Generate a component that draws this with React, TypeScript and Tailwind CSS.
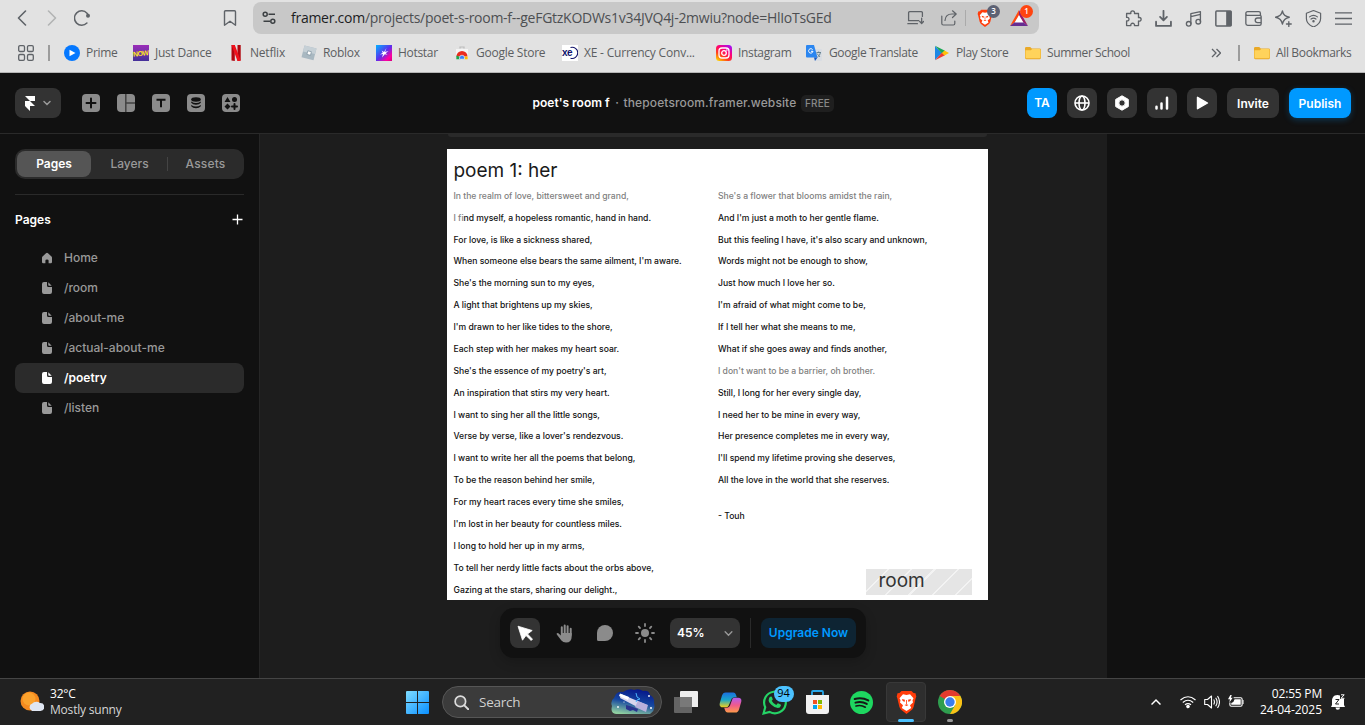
import React from 'react';

type IconProps = { children: React.ReactNode; className?: string; box?: string };

const Svg = ({ children, className = 'size-4', box = '0 0 16 16' }: IconProps) => (
  <svg viewBox={box} className={`shrink-0 ${className}`} fill="none">
    {children}
  </svg>
);

const LINE = { stroke: '#5f6368', strokeWidth: 1.4, strokeLinecap: 'round', strokeLinejoin: 'round' } as const;

const BraveLogo = ({ className }: { className: string }) => (
  <Svg box="0 0 20 24" className={className}>
    <path d="M5 1h10l2 2 2 .2.8 3.3-.7 2-2 8.5-1.4 2.6L10 24l-5.7-4.4L2.9 17 .9 8.500.2 6.500 1 3.200 3 3z" fill="#ff3d0b" />
    <path d="M10 5l3.500-.700 3.500 4-1 2 .5 2.300-3 2.700 1.200 2.700-4.700 3-4.700-3L6.500 15.300l-3-2.700.5-2.300-1-2 3.500-4z" fill="#fff" />
    <path d="M5.500 9l3 .800-.500 2.200-2-1.300zM14.500 9l-3 .800.500 2.200 2-1.300zM8 15l2 1 2-1-2-.800zM9.600 10h.8v4h-.8z" fill="#ff3d0b" />
  </Svg>
);

const Folder = () => (
  <Svg>
    <path d="M0 3.200Q0 2 1.200 2h4l1.600 1.600h7.700q1.500 0 1.500 1.300v7.900q0 1.400-1.400 1.400H1.400Q0 14.200 0 12.800z" fill="#e9a928" />
    <path d="M.5 5.300h5.300L7.200 4h7.300q1 0 1 1v7.300q0 1-1 1H1.500q-1 0-1-1z" fill="#ffd35b" />
  </Svg>
);

const Divider = () => <span className="h-4 w-[2px] shrink-0 bg-[#9c9c9c]" />;

const bookmarks = [
  {
    label: 'Prime', slot: 'w-[69px]', track: 'tracking-[-0.3px]',
    icon: <Svg><circle cx="8" cy="8" r="8" fill="#0578ff" /><path d="M5.500 4.800v6.400L11.500 8z" fill="#fff" /></Svg>,
  },
  {
    label: 'Just Dance', slot: 'w-[95px]', track: 'tracking-[-0.25px]',
    icon: (
      <span className="flex size-4 shrink-0 items-center justify-center bg-linear-to-b from-[#9b2bb8] to-[#43309a]">
        <span className="-rotate-6 font-['Liberation_Sans'] text-[7px] font-bold leading-none tracking-[-0.6px] text-[#ffe81c]">NOW</span>
      </span>
    ),
  },
  {
    label: 'Netflix', slot: 'w-[73px]', track: 'tracking-[-0.2px]',
    icon: <Svg><path d="M3.500 0H6.800V16L3.500 15.500zM9.500 0h3.200v15.500L9.500 16z" fill="#b1060f" /><path d="M3.500 0h3.300l5.900 15.800L9.500 16z" fill="#f0101c" /></Svg>,
  },
  {
    label: 'Roblox', slot: 'w-[75px]', track: 'tracking-[-0.3px]',
    icon: <Svg><path d="M3.500.500 15.500 3.500 12.500 15.300.500 12.200z" fill="#a9b8c1" /><path d="M3.500.500 15.500 3.500 14 9 2 6.500z" fill="#c6d0d6" /><path d="M6.800 5.800l3.600.9-.9 3.600-3.600-.9z" fill="#fff" stroke="#8497a3" strokeWidth=".8" /></Svg>,
  },
  {
    label: 'Hotstar', slot: 'w-[78px]', track: 'tracking-[-0.3px]',
    icon: (
      <Svg>
        <defs><linearGradient id="hs" x1="0" y1="0" x2="1" y2="1"><stop stopColor="#00b4ff" /><stop offset=".5" stopColor="#5a30ee" /><stop offset=".8" stopColor="#ff00a0" /><stop offset="1" stopColor="#d80080" /></linearGradient></defs>
        <path d="M0 0h16v16H0z" fill="url(#hs)" />
        <path d="M10.500 3 9 7 12.500 6 9.700 8.200l1.800 1.600-2.700-.5L6 12.500 7 9 4 9.500l2.700-1.800L5.700 5.500 8 7z" fill="#fff" />
      </Svg>
    ),
  },
  {
    label: 'Google Store', slot: 'w-[108px]', track: 'tracking-[-0.25px]',
    icon: (
      <Svg>
        <path d="M6 3.500V2h4v1.500" stroke="#bbb" strokeWidth="1.200" /><path d="M2 4h12v10H2z" fill="#f4f4f4" />
        <path d="M2.500 11.500a5.500 5.500 0 0 1 11 0z" fill="#ea2b1f" /><path d="M2.300 10.500 6.500 12v2.200H2.300z" fill="#1fa34a" /><path d="M9.500 11.500h4.200v2.700H8z" fill="#fbbc05" /><path d="M5.500 14.200v-1.500a2.500 2.500 0 0 1 5 0v1.500z" fill="#3b82f6" stroke="#fff" strokeWidth=".6" />
      </Svg>
    ),
  },
  {
    label: 'XE - Currency Conv...', slot: 'w-[154px]', track: 'tracking-[-0.2px]',
    icon: (
      <span className="relative flex size-4 shrink-0 items-center bg-white">
        <span className="relative -mt-px font-['Liberation_Sans'] text-[10px] font-bold leading-none tracking-[-0.5px] text-[#12146b]">xe</span>
        <svg viewBox="0 0 16 16" className="absolute inset-0 size-4" fill="none"><path d="M8.500 2.500A5.600 5.600 0 1 1 8.500 13.200" stroke="#12146b" strokeWidth="1.100" /></svg>
      </span>
    ),
  },
  {
    label: 'Instagram', slot: 'w-[90px]', track: 'tracking-[-0.35px]',
    icon: (
      <Svg>
        <defs><linearGradient id="ig" x1=".9" y1="0" x2=".2" y2="1"><stop stopColor="#9a10ff" /><stop offset=".4" stopColor="#ff0078" /><stop offset=".7" stopColor="#ff3b20" /><stop offset="1" stopColor="#ffc800" /></linearGradient></defs>
        <rect width="16" height="16" rx="3.500" fill="url(#ig)" /><rect x="3" y="3" width="10" height="10" rx="3" stroke="#fff" strokeWidth="1.300" /><circle cx="8" cy="8" r="2.300" stroke="#fff" strokeWidth="1.300" /><circle cx="10.900" cy="5.100" r=".8" fill="#fff" />
      </Svg>
    ),
  },
  {
    label: 'Google Translate', slot: 'w-[128px]', track: 'tracking-[-0.35px]',
    icon: (
      <Svg className="mr-px size-4">
        <path d="M6 4h9q1 0 1 1v10q0 1-1 1H9z" fill="#d9dde3" /><path d="M1 0h7l3.500 12.500H1q-1 0-1-1V1q0-1 1-1z" fill="#2b86f0" /><path d="M8 12.500h3.500L9 16z" fill="#1457c0" />
        <path d="M6.600 4.600A2.200 2.200 0 1 0 7 6.300H5" stroke="#fff" strokeWidth="1" /><path d="M10.500 7.500h4.500M12.700 6.500v1M11 8.500l3 3.500M14.500 7.500q-.5 3-3 4.500" stroke="#607d8b" strokeWidth=".9" />
      </Svg>
    ),
  },
  {
    label: 'Play Store', slot: 'w-[91px]', track: 'tracking-[-0.35px]',
    icon: <Svg><path d="M1 1v14l7-7z" fill="#1e88e5" /><path d="M1 .800 11 5.800 8 8.500z" fill="#1aa754" /><path d="M1 15.200 11 10.200 8 7.500z" fill="#f03c30" /><path d="M10.500 5.500 15 8l-4.500 2.500L8 8z" fill="#ffc107" /></Svg>,
  },
  { label: 'Summer School', slot: 'w-[186px]', track: 'tracking-[-0.4px]', icon: <Folder /> },
];

const browserActions = [
  <path key="a" {...LINE} strokeWidth={1.250} d="M1.500 3.300h4c-.8-3.400 4.200-3.400 3.400 0h3.800v3.900c3.300-1 3.300 4.200 0 3.200v4.300H8.900c.7-3-4.100-3-3.400 0h-4v-4.500c3 .8 3-4 0-3.200z" />,
  <path key="b" {...LINE} strokeWidth={1.700} d="M8 .8v8.500M4.800 6.500 8 9.700l3.200-3.200M1 11v4h14v-4" />,
  <g key="c" {...LINE} strokeWidth={1.250}><path d="M5.500 13V3.500l9-2V11M5.500 6.200l9-2" /><circle cx="3.500" cy="13" r="2.200" /><circle cx="12.500" cy="11" r="2.200" /></g>,
  <g key="d"><rect x=".8" y="1" width="14.400" height="14" rx=".8" {...LINE} /><path d="M10.500 1h5v14h-5z" fill="#5f6368" /></g>,
  <g key="e" {...LINE} strokeWidth={1.250}><path d="M14.500 5.200V3q0-1.500-1.500-1.500H2.500q-1.700 0-1.700 1.800T2.500 5h11.700q1 0 1 1v7q0 1.500-1.500 1.500H2.500q-1.700 0-1.700-1.700V3.500M15 7.500h-3.200a2.200 2.200 0 0 0 0 4.400H15" /></g>,
  <g key="f" {...LINE} strokeWidth={1.250}><path d="M7 .8q.8 5 6.500 6-5.500 1-6.500 6.500Q6 7.800.5 6.800 6 5.800 7 .8zM13 11v4.500M10.800 13.200h4.500" /></g>,
  <g key="g" {...LINE} strokeWidth={1.100}><path d="M8 .5 14.700 3v5c0 4-3 6.500-6.700 8-3.700-1.500-6.700-4-6.700-8V3z" /><path d="M4.300 6.500q3.700-3 7.400 0M5.700 8.500q2.300-1.800 4.600 0" /><circle cx="8" cy="10.500" r=".6" fill="#5f6368" /></g>,
  <path key="h" stroke="#5f6368" strokeWidth="1.300" d="M0 2.700h16M0 8h16M0 13.300h16" />,
];

function Browser() {
  return (
    <div className="flex h-[73px] shrink-0 flex-col border-b border-[#b5b5b5] bg-[#e2e2e2] font-['Open_Sans',sans-serif]">
      <div className="flex h-9 items-center">
        <div className="flex w-11 justify-center"><Svg><path {...LINE} strokeWidth={1.600} d="M11.500 1 4.500 8l7 7" /></Svg></div>
        <div className="flex w-4 justify-center"><Svg><path {...LINE} stroke="#b2b4b4" strokeWidth={1.600} d="M4.500 1l7 7-7 7" /></Svg></div>
        <div className="flex w-11 justify-center">
          <Svg><path {...LINE} strokeWidth={1.500} d="M12.900 13A7.200 7.200 0 1 1 13 3.200l1.500 2" /><circle cx="14" cy="5.700" r="2" fill="#5f6368" /></Svg>
        </div>
        <div className="ml-[116px] flex w-5 justify-center"><Svg><path {...LINE} strokeWidth={1.400} d="M3.500.7h9q1 0 1 1v13.500L8 11.200l-5.500 4V1.700q0-1 1-1z" /></Svg></div>
        <div className="mb-px ml-[13px] flex h-8 w-[786px] items-center rounded-[8px] bg-[#c8c8c8]">
          <Svg className="ml-[9px] size-[14px]" box="0 0 14 14">
            <g stroke="#3c4043" strokeWidth="1.500"><circle cx="3.200" cy="3.200" r="2" /><circle cx="10.800" cy="10.200" r="2" /><path d="M6.500 3.200H13M1.500 10.200H8" /></g>
          </Svg>
          <div className="ml-[15px] w-[612px] whitespace-nowrap text-[14px] tracking-[-0.265px] text-[#4d4f52]">
            <span className="text-[#1c1d1f]">framer.com</span>/projects/poet-s-room-f--geFGtzKODWs1v34JVQ4j-2mwiu?node=HlIoTsGEd
          </div>
          <Svg className="ml-[4px] size-[17px]"><g {...LINE} strokeWidth={1.200}><path d="M14.500 7V3.500q0-1-1-1h-11q-1 0-1 1V11h9.500M.8 13.800h9M13.800 8.500v5M12 11.800l1.800 1.800 1.800-1.800" /></g></Svg>
          <Svg className="ml-[17px] size-4"><g {...LINE} strokeWidth={1.200}><path d="M.8 6v7.500q0 1.500 1.500 1.500h10q1.500 0 1.500-1.500V11M4 10.500Q4.500 4 11 4h4M11.500.8 15.200 4l-3.700 3.500" /></g></Svg>
          <span className="ml-2 h-4 w-px bg-[#aaa]" />
          <div className="relative ml-[11px] flex w-[33px]">
            <BraveLogo className="h-[18px] w-4" />
            <span className="absolute -top-[4px] left-[10px] flex size-[13px] items-center justify-center rounded-full bg-[#5d6274] text-[8px] font-semibold text-white">3</span>
          </div>
          <div className="relative flex">
            <Svg className="h-[16px] w-[18px]" box="0 0 18 16"><path d="M9 0v6L5 12l-5 4z" fill="#ff4a12" /><path d="M9 0v6l4 6 5 4z" fill="#9c1c68" /><path d="M0 16l5-4h8l5 4z" fill="#662d91" /><path d="M9 5l4.300 7.500H4.700z" fill="#fff" /></Svg>
            <span className="absolute -top-[5px] left-[10px] flex size-[13px] items-center justify-center rounded-full bg-[#ff4410] text-[8px] font-semibold text-white">1</span>
          </div>
        </div>
        <div className="ml-[79px] flex">
          {browserActions.map((icon, i) => (
            <div key={i} className="flex w-[30px] justify-center"><Svg className="size-[17px]">{icon}</Svg></div>
          ))}
        </div>
      </div>
      <div className="flex h-[34px] items-center pl-[18px] text-[12px] text-[#5c5e61]">
        <Svg><g stroke="#5f6368" strokeWidth="1.300"><rect x=".7" y=".7" width="5.800" height="5.800" rx="1.300" /><rect x="9.500" y=".7" width="5.800" height="5.800" rx="1.300" /><rect x=".7" y="9.500" width="5.800" height="5.800" rx="1.300" /><rect x="9.500" y="9.500" width="5.800" height="5.800" rx="1.300" /></g></Svg>
        <span className="w-[14px]" /><Divider /><span className="w-[14px]" />
        {bookmarks.map((b) => (
          <div key={b.label} className={`flex shrink-0 items-center gap-1.5 whitespace-nowrap ${b.slot} ${b.track}`}>
            {b.icon}<span>{b.label}</span>
          </div>
        ))}
        <Svg className="size-[10px]" box="0 0 10 10"><path d="M1 1l4 4-4 4M5.500 1l4 4-4 4" stroke="#5f6368" strokeWidth="1.300" /></Svg>
        <span className="w-[17px]" /><Divider /><span className="w-[14px]" />
        <div className="flex items-center gap-1.5 whitespace-nowrap tracking-[-0.35px]"><Folder />All Bookmarks</div>
      </div>
    </div>
  );
}

const insertTools = [
  <path key="a" d="M9 4.500v9M4.500 9h9" stroke="#111" strokeWidth="2" strokeLinecap="round" />,
  <path key="b" d="M8.800 0v18M9 9h9" stroke="#111" strokeOpacity=".6" strokeWidth="1.500" />,
  <path key="c" d="M4.500 5.700h9M9 5.700v7.600" stroke="#111" strokeWidth="2" />,
  <g key="d" fill="#111"><ellipse cx="9" cy="5.500" rx="4.800" ry="2.200" /><path d="M4.200 7.500q4.800 3.200 9.600 0v1.200q-1.500 2-4.800 2T4.200 8.700zM4.200 11q4.800 3.200 9.600 0v1.200q-1.500 2-4.800 2t-4.800-2z" /></g>,
  <g key="e" fill="#111"><path d="M5.500 3l3 5h-6zM5.500 9.500l3 3-3 3-3-3z" /><circle cx="12.500" cy="5.500" r="2.500" /><path d="M12.500 10v5M10 12.500h5" stroke="#111" strokeWidth="2" strokeLinecap="round" /></g>,
];

const headerIcons = [
  <g key="a" stroke="#fff" strokeWidth="1.600"><circle cx="8" cy="8" r="7" /><ellipse cx="8" cy="8" rx="3" ry="7" /><path d="M1 8h14" /></g>,
  <path key="b" fill="#fff" stroke="#fff" strokeLinejoin="round" fillRule="evenodd" d="M8 .8l6.300 3.600v7.200L8 15.200l-6.300-3.600V4.400zM8 4.800a3.200 3.200 0 1 0 0 6.400 3.200 3.200 0 0 0 0-6.400z" />,
  <path key="c" stroke="#fff" strokeWidth="2.500" strokeLinecap="round" d="M2.500 11.700v1.800M7.500 8.500v5M13 2.800v10.700" />,
  <path key="d" fill="#fff" stroke="#fff" strokeWidth="1.400" strokeLinejoin="round" d="M3.500 2.300v11.400L13.500 8z" />,
];

function FramerHeader() {
  return (
    <div className="flex h-[61px] shrink-0 items-center border-b border-[#2a2a2a] pl-[15px]">
      <div className="flex h-[30px] w-[46px] shrink-0 items-center justify-center gap-[8px] rounded-[8px] bg-[#333]">
        <Svg className="h-[15px] w-[10px]" box="0 0 10 15"><path d="M0 0h10v5H5zM0 5h5l5 5H5v5l-5-5z" fill="#fff" /></Svg>
        <Svg className="size-[8px]" box="0 0 8 8"><path d="M1 2.500 4 5.500l3-3" stroke="#999" strokeWidth="1.500" strokeLinecap="round" /></Svg>
      </div>
      <div className="ml-[21px] flex gap-[17px]">
        {insertTools.map((t, i) => (
          <Svg key={i} box="0 0 18 18" className="size-[18px] rounded-[4px] bg-[#8b8b8b]">{t}</Svg>
        ))}
      </div>
      <div className="ml-[292.500px] flex w-[494.500px] shrink-0 items-center whitespace-nowrap text-[12px]">
        <span className="w-[78px] font-semibold text-white">poet's room f</span>
        <span className="w-[13px] text-center font-medium text-[#999]">·</span>
        <span className="w-[174px] font-medium tracking-[0.120px] text-[#999]">thepoetsroom.framer.website</span>
        <span className="ml-[3.500px] flex h-[17px] w-[33px] items-center justify-center rounded-[5px] bg-[#1f1f1f] text-[10px] font-medium tracking-[0.1px] text-[#888]">FREE</span>
      </div>
      <div className="flex shrink-0 gap-[10px] text-[12px] font-semibold text-white">
        <div className="flex size-[30px] items-center justify-center rounded-[8px] bg-[#09f]">TA</div>
        {headerIcons.map((t, i) => (
          <div key={i} className="flex size-[30px] items-center justify-center rounded-[8px] bg-[#333]"><Svg>{t}</Svg></div>
        ))}
        <div className="flex h-[30px] w-[52px] items-center justify-center rounded-[8px] bg-[#333] pt-px">Invite</div>
        <div className="flex h-[30px] w-[62px] items-center justify-center rounded-[8px] bg-[#09f] pt-px shadow-[0_2px_6px_#0099ff44]">Publish</div>
      </div>
    </div>
  );
}

const pages = ['Home', '/room', '/about-me', '/actual-about-me', '/poetry', '/listen'];

function Sidebar() {
  return (
    <div className="flex w-[260px] shrink-0 flex-col border-r border-[#262626] px-[15px] pt-[15px] text-[12px] font-medium text-[#999]">
      <div className="flex h-[30px] w-[229px] items-center rounded-[10px] bg-[#2b2b2b] p-[2px]">
        <div className="flex h-[26px] w-[74px] shrink-0 items-center justify-center rounded-[8px] bg-[#555] font-semibold text-white">Pages</div>
        <div className="flex h-[14px] w-[77px] shrink-0 items-center justify-center border-r border-[#444] pl-px">Layers</div>
        <div className="flex w-[75px] shrink-0 items-center justify-center tracking-[0.150px]">Assets</div>
      </div>
      <div className="mt-[15px] h-px w-[229px] bg-[#2a2a2a]" />
      <div className="mt-[14px] flex h-[22px] w-[229px] items-center justify-between text-white">
        <span className="text-[12px] font-semibold">Pages</span>
        <Svg className="mb-[2px] mr-[1px] size-[11px]" box="0 0 11 11"><path d="M5.500.5v10M.5 5.500h10" stroke="#fff" strokeWidth="1.300" /></Svg>
      </div>
      <div className="mt-[12px] flex w-[229px] flex-col">
        {pages.map((p) => (
          <div
            key={p}
            className={`flex h-[30px] items-center gap-[12px] rounded-[8px] pl-[27px] ${p === '/poetry' ? 'bg-[#2b2b2b] font-semibold text-white' : ''}`}
          >
            {p === 'Home' ? (
              <Svg className="h-[12px] w-[10px]" box="0 0 10 12"><path d="M4 1.300q1-.9 2 0L9.500 4.500q.5.500.5 1.200V10q0 1.200-1.200 1.200H6.600V8.500q0-1-1.600-1t-1.600 1v2.700H1.200Q0 11.200 0 10V5.700q0-.7.500-1.200z" fill="currentColor" /></Svg>
            ) : (
              <Svg className="h-[12px] w-[10px]" box="0 0 10 12"><path d="M0 2q0-2 2-2h3v3.500Q5 5 6.500 5H10v5q0 2-2 2H2q-2 0-2-2zM6.300.3 9.700 3.700H7q-.7 0-.7-.7z" fill="currentColor" /></Svg>
            )}
            <span>{p}</span>
          </div>
        ))}
      </div>
    </div>
  );
}

const leftVerse = [
  'In the realm of love, bittersweet and grand,',
  'I find myself, a hopeless romantic, hand in hand.',
  'For love, is like a sickness shared,',
  "When someone else bears the same ailment, I'm aware.",
  "She's the morning sun to my eyes,",
  'A light that brightens up my skies,',
  "I'm drawn to her like tides to the shore,",
  'Each step with her makes my heart soar.',
  "She's the essence of my poetry's art,",
  'An inspiration that stirs my very heart.',
  'I want to sing her all the little songs,',
  "Verse by verse, like a lover's rendezvous.",
  'I want to write her all the poems that belong,',
  'To be the reason behind her smile,',
  'For my heart races every time she smiles,',
  "I'm lost in her beauty for countless miles.",
  'I long to hold her up in my arms,',
  'To tell her nerdy little facts about the orbs above,',
  'Gazing at the stars, sharing our delight.,',
];

const rightVerse = [
  "She's a flower that blooms amidst the rain,",
  "And I'm just a moth to her gentle flame.",
  "But this feeling I have, it's also scary and unknown,",
  'Words might not be enough to show,',
  'Just how much I love her so.',
  "I'm afraid of what might come to be,",
  'If I tell her what she means to me,',
  'What if she goes away and finds another,',
  "I don't want to be a barrier, oh brother.",
  'Still, I long for her every single day,',
  'I need her to be mine in every way,',
  'Her presence completes me in every way,',
  "I'll spend my lifetime proving she deserves,",
  'All the love in the world that she reserves.',
];

const faded = [leftVerse[0], rightVerse[0], rightVerse[8]];

const Verse = ({ lines }: { lines: string[] }) => (
  <>
    {lines.map((l) => (
      <p key={l} className={`h-[21.880px] whitespace-nowrap leading-[21.880px] ${faded.includes(l) ? 'text-[#808080]' : ''}`}>
        {l.startsWith('I find') ? <><span className="text-[#808080]">I fi</span>{l.slice(4)}</> : l}
      </p>
    ))}
  </>
);

function Canvas() {
  return (
    <div className="flex w-[847px] shrink-0 flex-col items-start bg-[#1d1d1d]">
      <div className="ml-[188px] h-[3px] w-[539px] shrink-0 rounded-b-[3px] bg-[#2a2a2a]" />
      <div className="ml-[187px] mt-[12px] flex h-[451px] w-[541.400px] shrink-0 flex-col overflow-hidden bg-white text-[#1a1a1a]">
        <h1 className="ml-[6.400px] mt-[7px] h-[29px] text-[19px] leading-[29px]">poem 1: her</h1>
        <div className="flex pt-[0.800px] text-[8.580px] font-medium text-[#111]">
          <div className="ml-[6.500px] w-[264.500px]"><Verse lines={leftVerse} /></div>
          <div className="flex flex-col">
            <Verse lines={rightVerse} />
            <p className="mt-[12.500px] h-[22px] leading-[22px]">- Touh</p>
            <div className="ml-[148px] mt-[42px] flex h-[26px] w-[105.500px] items-center bg-[repeating-linear-gradient(135deg,#e5e5e5_0_15px,#f3f3f3_15px_16.500px)] pl-[12.500px] text-[19px] font-normal text-[#333]"><span className="-mt-px">room</span></div>
          </div>
        </div>
      </div>
      <div className="ml-[240px] mt-[8px] flex h-[50px] w-[366px] shrink-0 items-center rounded-[14px] bg-[#111] pl-[10px] shadow-[0_4px_12px_#00000030]">
        <div className="flex size-[30px] items-center justify-center rounded-[8px] bg-[#333]">
          <Svg><path d="M1 1.200 15.200 5.500 10.500 9 15.500 14.200 14.200 15.500 9 10.500 5.500 15.200z" fill="#fff" stroke="#fff" strokeWidth=".8" strokeLinejoin="round" /></Svg>
        </div>
        <div className="flex w-[49px] justify-center">
          <Svg className="h-[19px] w-[17px]" box="0 0 17 19"><path d="M5.800 11V3.300M8.700 10V1.500M11.600 10V2.200M14.700 11V4.800" stroke="#8b8b8b" strokeWidth="2" strokeLinecap="round" /><path d="M5 9h10.700v3.500Q15.700 18.500 10 18.500q-3 0-4.600-2L.8 10.600q-.7-1.300.7-1.500 1 0 1.700.8L5 11.500z" fill="#8b8b8b" /></Svg>
        </div>
        <div className="flex w-[32px] justify-center"><Svg><path d="M8 0a8 8 0 0 1 0 16H1.500Q0 16 0 14.500V8A8 8 0 0 1 8 0z" fill="#8b8b8b" /></Svg></div>
        <div className="flex w-[48px] justify-center">
          <Svg className="size-[20px]" box="0 0 20 20"><circle cx="10" cy="10" r="4" fill="#8b8b8b" /><path d="M10 1v2M10 17v2M1 10h2M17 10h2M3.700 3.700l1.300 1.300M15 15l1.300 1.300M3.700 16.300 5 15M15 5l1.300-1.300" stroke="#8b8b8b" strokeWidth="1.800" strokeLinecap="round" /></Svg>
        </div>
        <div className="ml-[1px] flex h-[30px] w-[70px] items-center justify-between rounded-[8px] bg-[#333] pl-[7px] pr-[7px] text-[12px] font-semibold text-white">
          45%
          <Svg className="size-[9px]" box="0 0 8 8"><path d="M1 2.500 4 5.500l3-3" stroke="#999" strokeWidth="1.200" strokeLinecap="round" /></Svg>
        </div>
        <span className="ml-[10px] h-[30px] w-px bg-[#2a2a2a]" />
        <div className="ml-[10px] flex h-[30px] w-[95px] items-center justify-center whitespace-nowrap rounded-[8px] bg-[#0e2433] text-[12px] font-semibold text-[#09f]">Upgrade Now</div>
      </div>
    </div>
  );
}

const WindowsPane = () => (
  <Svg box="0 0 23 23" className="size-[23px]">
    <defs><linearGradient id="win" x1="0" y1="0" x2="1" y2="1"><stop stopColor="#7fdcff" /><stop offset="1" stopColor="#0a8fff" /></linearGradient></defs>
    <path d="M1 0h10v11H0V1q0-1 1-1zM12 0h10q1 0 1 1v10H12zM0 12h11v11H1q-1 0-1-1zM12 12h11v10q0 1-1 1H12z" fill="url(#win)" />
  </Svg>
);

const Telescope = () => (
  <Svg box="0 0 44 26" className="h-[26px] w-[44px]">
    <defs><linearGradient id="sky" x1="0.600" y1="0" x2=".3" y2="1"><stop stopColor="#06178a" /><stop offset=".5" stopColor="#1546a0" /><stop offset="1" stopColor="#8fcfa0" /></linearGradient></defs>
    <path d="M5 5q3-3 7-2 6-4 11-2 5-2 9 1 6-1 7 4 5 3 4 8 2 7-4 11H5Q-1 24 1 17q-2-5 2-8z" fill="url(#sky)" />
    <path d="M10 5l26 11-2 6L9 9z" fill="#d9d6ee" /><path d="M27 12l10 4-2 7-11-5z" fill="#b9b0dc" /><path d="M9 4.500 18 8l-1 3-9-4z" fill="#fff" />
    <path d="M15 16l4 1 3 1 5 2-1 3-4-2-3 1-4-2z" fill="#2a348f" /><path d="M25 4l1 4 3 2-3 1-1 2" stroke="#4bb4ff" /><g fill="#fff"><circle cx="7" cy="18" r=".9" /><circle cx="38" cy="7" r=".9" /><circle cx="40" cy="19" r="1" /><circle cx="13" cy="13" r=".6" /></g>
  </Svg>
);

const taskbarApps = [
  <Svg key="tv" box="0 0 24 22" className="h-[22px] w-[24px]"><path d="M7 0h16q1 0 1 1v15H6V1q0-1 1-1z" fill="#eee" /><path d="M0 6h18v16H1q-1 0-1-1z" fill="#6b6b6b" fillOpacity=".9" /></Svg>,
  <Svg key="cp" box="0 0 24 22" className="h-[21px] w-[23px]">
    <defs><linearGradient id="cpa" x1="0" y1="0" x2="0" y2="1"><stop stopColor="#1b6fe0" /><stop offset=".5" stopColor="#19a7c8" /><stop offset="1" stopColor="#f2d11c" /></linearGradient><linearGradient id="cpb" x1="0" y1="0" x2="0" y2="1"><stop stopColor="#b45cf0" /><stop offset=".5" stopColor="#ef5a8c" /><stop offset="1" stopColor="#ff9b4a" /></linearGradient></defs>
    <path d="M7 .5h8q2 0 2.600 2l1 3H16q-2 0-2.600 2L11 14q-.6 2-2.500 2H4Q-.2 16 .8 11.500L3 4Q4 .5 7 .5z" fill="url(#cpa)" />
    <path d="M17 21.500H9q-2 0-2.600-2l-1-3H8q2 0 2.600-2L13 8q.6-2 2.500-2H20q4.200 0 3.200 4.500L21 18q-1 3.500-4 3.500z" fill="url(#cpb)" />
    <path d="M13.500 6.500h2q-1.300 0-1.800 1.500l-2.300 6.500q-.6 1.500-2 1.500H8q1.400 0 2-1.500z" fill="#212121" />
  </Svg>,
  <div key="wa" className="relative flex">
    <Svg box="0 0 24 24" className="size-[25px]"><path d="M1.500 22.500l1.600-6A10.400 10.400 0 1 1 7.300 21z" stroke="#25d366" strokeWidth="2.100" /><path d="M8 6.500q1.200-.5 1.600.5l.7 1.800q0 .6-1 1.500 1.600 3 4.400 4l1.200-1.400q.4-.4 1 0l2 1q.5.300.3 1-.7 2.400-3 2.400-3 0-6.200-3.100T6.500 9q0-1.700 1.500-2.500z" fill="#25d366" /></Svg>
    <span className="absolute -top-[4px] left-[12px] flex h-[16px] w-[20px] items-center justify-center rounded-full bg-[#4cc2ff] text-[11px] text-black">94</span>
  </div>,
  <Svg key="st" box="0 0 23 24" className="mr-px h-[24px] w-[23px]"><path d="M6 5.500V2q0-1 1-1h9q1 0 1 1v3.500" stroke="#28a8ea" strokeWidth="1.800" /><path d="M0 5h23v16q0 3-3 3H3q-3 0-3-3z" fill="#f1f1f1" /><path d="M7 10h4v4H7z" fill="#f25022" /><path d="M12 10h4v4h-4z" fill="#7fba00" /><path d="M7 15h4v4H7z" fill="#00a4ef" /><path d="M12 15h4v4h-4z" fill="#ffb900" /></Svg>,
  <Svg key="sp" box="0 0 24 24" className="mr-px size-[23px]"><circle cx="12" cy="12" r="12" fill="#1ed760" /><g stroke="#161616" strokeLinecap="round"><path d="M5 8.300q7.500-2 14 1.500" strokeWidth="2.300" /><path d="M5.700 12.200q6.300-1.800 11.800 1.300" strokeWidth="2" /><path d="M6.300 15.700q5.200-1.500 9.700 1.200" strokeWidth="1.700" /></g></Svg>,
  <BraveLogo key="br" className="h-[24px] w-[21px]" />,
  <Svg key="ch" box="0 0 24 24" className="size-[24px]"><circle cx="12" cy="12" r="12" fill="#2f9e4f" /><path d="M12 12 1.600 6A12 12 0 0 1 22.400 6z" fill="#e33b2e" /><path d="M12 6h10.400A12 12 0 0 1 12 24l5.200-9z" fill="#fbc116" /><circle cx="12" cy="12" r="6" fill="#fff" /><circle cx="12" cy="12" r="4.700" fill="#3b7ded" /></Svg>,
];

function Taskbar() {
  return (
    <div className="flex h-[47px] shrink-0 items-center border-t border-[#454545] bg-[#212121] font-['Open_Sans',sans-serif] text-white">
      <Svg className="ml-[20px] h-[22px] w-[24px]" box="0 0 24 22"><circle cx="10" cy="10" r="9.500" fill="#f58a1f" /><circle cx="9" cy="8" r="6.500" fill="#fba22d" /><path d="M12 20a4 4 0 0 1 .3-7.500A5.500 5.500 0 0 1 20 12a4 4 0 0 1 .5 8z" fill="#dfe6f2" /></Svg>
      <div className="ml-[6px] w-[356px] whitespace-nowrap text-[12px] leading-[16px] tracking-[-0.2px]">
        <div>32°C</div>
        <div className="text-[#d6d6d6]">Mostly sunny</div>
      </div>
      <WindowsPane />
      <div className="ml-[13px] flex h-[32px] w-[220px] items-center rounded-full border border-[#565656] bg-[#3b3b3b] pl-[11px]">
        <Svg className="size-[15px]"><circle cx="6.800" cy="6.800" r="5.600" stroke="#ddd" strokeWidth="1.800" fill="#555" /><path d="M11 11l4.200 4.200" stroke="#ddd" strokeWidth="2" strokeLinecap="round" /></Svg>
        <span className="ml-[10px] w-[132px] text-[13.500px] tracking-[-0.250px] text-[#d0d0d0]">Search</span>
        <Telescope />
      </div>
      <div className="ml-[2px] flex">
        {taskbarApps.map((a, i) => (
          <div key={i} className="flex w-[44px] justify-center">
            <div className={`relative flex h-[40px] w-[40px] items-center justify-center rounded-[4px] ${i === 5 ? 'border border-[#383838] bg-[#2e2e2e]' : ''}`}>
              {a}
              {i === 5 && <span className="absolute -bottom-px h-[3px] w-[16px] rounded-full bg-[#4cc2ff]" />}
              {i === 6 && <span className="absolute bottom-0 h-[3px] w-[6px] rounded-full bg-[#9a9a9a]" />}
            </div>
          </div>
        ))}
      </div>
      <Svg className="ml-[179px] size-[10px]" box="0 0 10 10"><path d="M.5 7.500 5 3l4.500 4.500" stroke="#fff" strokeWidth="1.500" /></Svg>
      <Svg className="ml-[19px] size-4"><g stroke="#fff" strokeWidth="1.200"><path d="M.5 6q7.500-6.500 15 0M2.800 8.500q5.200-4.500 10.400 0M5 10.800q3-2.500 6 0" /><circle cx="8" cy="12.500" r="1.200" fill="#fff" /></g></Svg>
      <Svg className="ml-[8px] size-4"><g stroke="#fff" strokeWidth="1.100" strokeLinejoin="round"><path d="M.7 5.500h2.800L7.500 2v12l-4-3.500H.7zM9.700 5.500q1.500 2.500 0 5M11.700 3.700q2.800 4.300 0 8.600M13.500 2q4 6 0 12" /></g></Svg>
      <Svg className="mb-px ml-[8px] size-[16px]" box="0 0 17 17"><path d="M6 4h7.500q1.500 0 1.500 1.500v6q0 1.500-1.500 1.500h-10Q2 13 2 11.500V9" stroke="#fff" strokeWidth="1.200" /><path d="M7 5.500h6.500v6h-10V9.500q3-1 3.500-4zM15.500 6.500h1v4h-1zM2.500 1 0 5.500h2L1.500 9 5 4H3l1-3z" fill="#fff" /></Svg>
      <div className="ml-[8px] w-[70px] whitespace-nowrap text-right text-[12px] leading-[16px]">
        <div className="tracking-[-0.2px]">02:55 PM</div>
        <div className="tracking-[-0.050px]">24-04-2025</div>
      </div>
      <Svg className="ml-[8px] size-[16px]"><path d="M2 6a5.500 5.500 0 0 1 8-4.500V5h4v6l1 2H1l1-2zM5.500 13.500h4.500a2.200 2.200 0 0 1-4.500 0z" fill="#fff" /><path d="M5.500 5.500h3.500l-3.500 4.500h3.500M11 1h3l-3 3.500h3" stroke="#212121" strokeWidth="1" /><path d="M11 .8h3.200L11 4.300h3.400" stroke="#fff" /></Svg>
    </div>
  );
}

export default function App() {
  return (
    <div className="flex h-[725px] w-[1365px] flex-col overflow-hidden bg-[#111] font-['Inter',sans-serif]">
      <Browser />
      <FramerHeader />
      <div className="flex h-[544px] shrink-0 overflow-hidden">
        <Sidebar />
        <Canvas />
      </div>
      <Taskbar />
    </div>
  );
}
